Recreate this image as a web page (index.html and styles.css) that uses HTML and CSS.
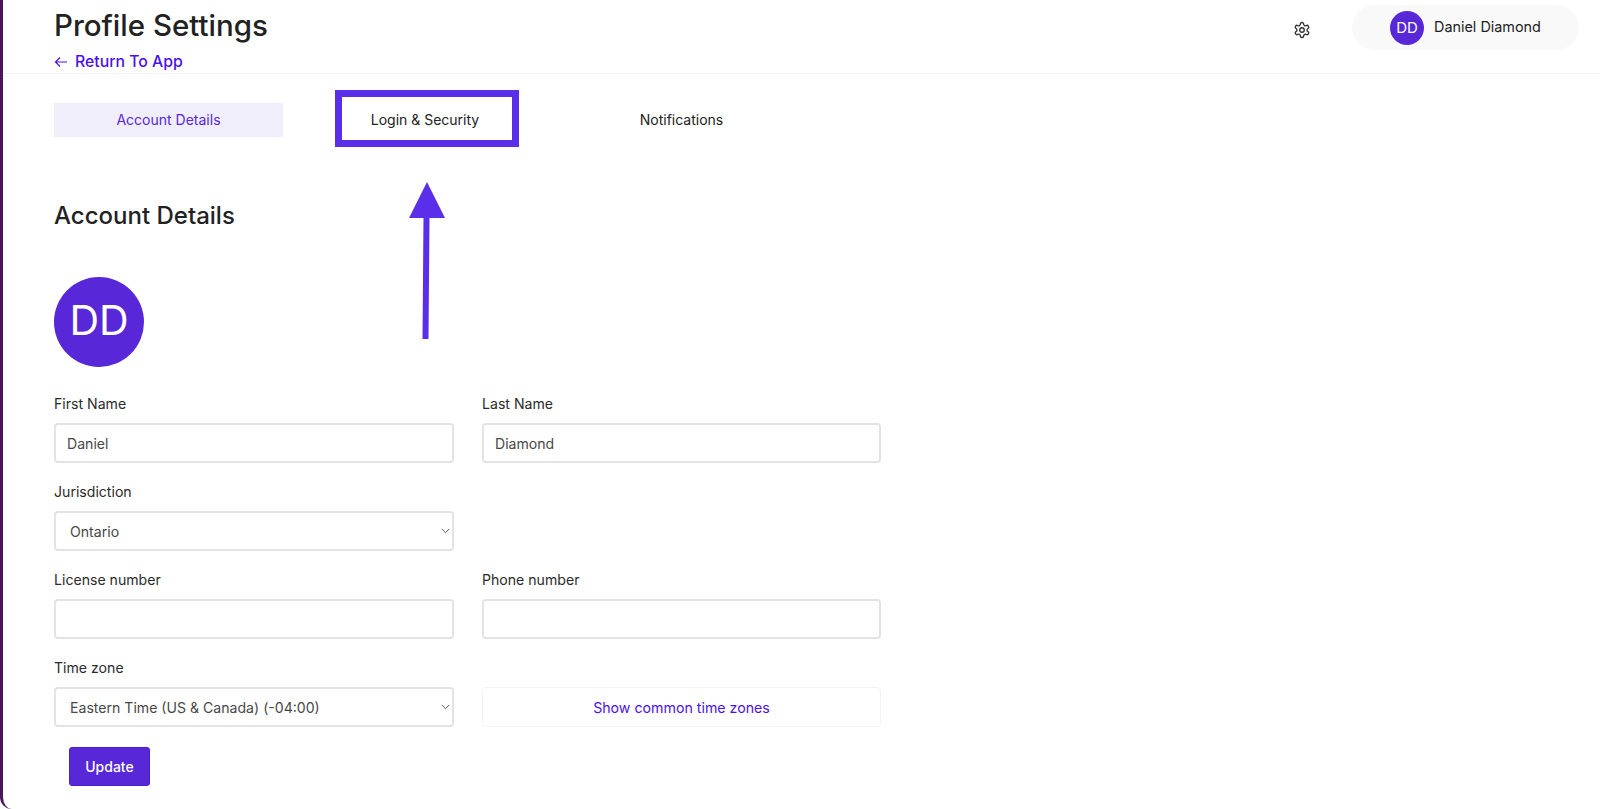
FILE: index.html
```html
<!DOCTYPE html>
<html lang="en">

<head>
  <meta charset="UTF-8">
  <meta name="viewport" content="width=device-width, initial-scale=1.0">
  <title>Profile Settings</title>
  <link rel="stylesheet" href="styles.css">
</head>

<body>
  <div class="app">
    <header class="topbar">
      <div class="topbar-title">
        <h1>Profile Settings</h1>
        <a href="#" class="back-link">
          <svg width="14" height="12" viewBox="0 0 14 12" fill="none" stroke="currentColor" stroke-width="1.2"><path d="M13 6H1.5M6 1.5L1.5 6L6 10.5"/></svg>
          Return To App
        </a>
      </div>
      <a href="#" class="gear" aria-label="Settings">
        <svg width="18" height="18" viewBox="0 0 24 24" fill="none" stroke="#333" stroke-width="1.8" stroke-linecap="round" stroke-linejoin="round"><path d="M12.2 2h-.4a2 2 0 0 0-2 2v.2a2 2 0 0 1-1 1.7l-.4.3a2 2 0 0 1-2 0l-.2-.1a2 2 0 0 0-2.7.7l-.2.4a2 2 0 0 0 .7 2.7l.2.1a2 2 0 0 1 1 1.7v.5a2 2 0 0 1-1 1.8l-.2.1a2 2 0 0 0-.7 2.7l.2.4a2 2 0 0 0 2.7.7l.2-.1a2 2 0 0 1 2 0l.4.3a2 2 0 0 1 1 1.7v.2a2 2 0 0 0 2 2h.4a2 2 0 0 0 2-2v-.2a2 2 0 0 1 1-1.7l.4-.3a2 2 0 0 1 2 0l.2.1a2 2 0 0 0 2.7-.7l.2-.4a2 2 0 0 0-.7-2.7l-.2-.1a2 2 0 0 1-1-1.8v-.5a2 2 0 0 1 1-1.7l.2-.1a2 2 0 0 0 .7-2.7l-.2-.4a2 2 0 0 0-2.7-.7l-.2.1a2 2 0 0 1-2 0l-.4-.3a2 2 0 0 1-1-1.7V4a2 2 0 0 0-2-2z"/><circle cx="12" cy="12" r="3"/></svg>
      </a>
      <div class="user-pill">
        <span class="user-avatar">DD</span>
        <span class="user-name">Daniel Diamond</span>
      </div>
    </header>

    <main class="content">
      <nav class="tabs">
        <a href="#" class="tab active">Account Details</a>
        <a href="#" class="tab">Login &amp; Security</a>
        <a href="#" class="tab">Notifications</a>
      </nav>

      <h2>Account Details</h2>
      <div class="big-avatar">DD</div>

      <form class="details-form">
        <div class="field">
          <label for="first">First Name</label>
          <input id="first" type="text" value="Daniel">
        </div>
        <div class="field">
          <label for="last">Last Name</label>
          <input id="last" type="text" value="Diamond">
        </div>
        <div class="field">
          <label for="jurisdiction">Jurisdiction</label>
          <div class="select-wrap">
            <select id="jurisdiction">
              <option>Ontario</option>
            </select>
            <svg class="chevron" width="9" height="6" viewBox="0 0 9 6" fill="none" stroke="#555" stroke-width="1"><path d="M.8 1l3.7 3.7L8.2 1"/></svg>
          </div>
        </div>
        <div class="field empty"></div>
        <div class="field">
          <label for="license">License number</label>
          <input id="license" type="text">
        </div>
        <div class="field">
          <label for="phone">Phone number</label>
          <input id="phone" type="text">
        </div>
        <div class="field">
          <label for="zone">Time zone</label>
          <div class="select-wrap">
            <select id="zone">
              <option>Eastern Time (US &amp; Canada) (-04:00)</option>
            </select>
            <svg class="chevron" width="9" height="6" viewBox="0 0 9 6" fill="none" stroke="#555" stroke-width="1"><path d="M.8 1l3.7 3.7L8.2 1"/></svg>
          </div>
        </div>
        <div class="field zone-toggle">
          <button type="button" class="common-zones">Show common time zones</button>
        </div>
      </form>

      <button type="button" class="update-btn">Update</button>
    </main>

    <!-- annotation drawn over the screenshot -->
    <div class="callout-box"></div>
    <svg class="callout-arrow" width="36" height="157" viewBox="0 0 36 157">
      <path d="M18 0L36 36H20.5L19.5 157H13.5L14.5 36H0z" fill="#5b2eea"/>
    </svg>
  </div>
</body>

</html>
```

FILE: styles.css
```css
* {
  box-sizing: border-box;
}

html, body {
  margin: 0;
  height: 100%;
  background-color: #fff;
}

body {
  font-family: 'Inter', 'Liberation Sans', sans-serif;
  color: #222;
  overflow: hidden;
}

a {
  text-decoration: none;
}

.app {
  position: relative;
  height: 809px;
  border-left: 3px solid #4a1659;
  border-bottom-left-radius: 12px;
}

.topbar {
  display: flex;
  align-items: flex-start;
  height: 74px;
  padding: 5px 21px 0 51px;
  border-bottom: 1px solid #f3f3f4;
}

.topbar-title {
  flex: 1;
}

h1 {
  margin: 0;
  font-size: 29.5px;
  line-height: 41px;
  font-weight: 500;
  color: #222;
}

.back-link {
  display: flex;
  align-items: center;
  gap: 7px;
  margin-top: 6px;
  font-size: 15.8px;
  line-height: 20px;
  font-weight: 500;
  color: #4a12e8;
}

.gear {
  display: flex;
  margin: 16px 41px 0 0;
}

.user-pill {
  display: flex;
  align-items: center;
  gap: 10px;
  width: 227px;
  height: 45px;
  padding-left: 38px;
  border-radius: 23px;
  background-color: #f9f9fa;
}

.user-avatar {
  display: flex;
  align-items: center;
  justify-content: center;
  width: 34px;
  height: 34px;
  border-radius: 50%;
  background-color: #5727d8;
  color: #fff;
  font-size: 15px;
}

.user-name {
  font-size: 14.4px;
  line-height: 20px;
  margin-top: -2px;
  color: #222;
}

.content {
  padding: 29px 0 0 51px;
}

.tabs {
  display: flex;
  gap: 27.5px;
}

.tab {
  width: 229px;
  height: 34px;
  line-height: 34px;
  text-align: center;
  font-size: 14px;
  color: #222;
}

.tab.active {
  background-color: #f1eefc;
  color: #5727d8;
}

h2 {
  margin: 64px 0 0;
  font-size: 24px;
  line-height: 30px;
  font-weight: 500;
  color: #222;
}

.big-avatar {
  display: flex;
  align-items: center;
  justify-content: center;
  width: 90px;
  height: 90px;
  margin-top: 46px;
  padding-bottom: 4px;
  border-radius: 50%;
  background-color: #5727d8;
  color: #fff;
  font-size: 41px;
}

.details-form {
  display: grid;
  grid-template-columns: 400px 399px;
  column-gap: 28px;
  row-gap: 18px;
  margin-top: 26px;
}

.field label {
  display: block;
  height: 20px;
  margin-bottom: 10px;
  font-size: 14.1px;
  line-height: 22px;
  color: #2b2b2b;
}

.field input, .field select {
  display: block;
  width: 100%;
  height: 40px;
  border: 2px solid #e3e3e3;
  border-radius: 4px;
  background-color: #fff;
  font-family: inherit;
  font-size: 14.1px;
  color: #484848;
}

.field input {
  padding: 0 11px;
}

.field select {
  padding: 0 14px;
  appearance: none;
}

.select-wrap {
  position: relative;
}

.chevron {
  position: absolute;
  top: 17px;
  right: 4px;
}

.zone-toggle {
  padding-top: 30px;
}

.common-zones {
  display: block;
  width: 100%;
  height: 40px;
  border: 1px solid #f3f3f4;
  border-radius: 4px;
  background-color: #fff;
  font-family: inherit;
  font-size: 14.2px;
  color: #4a12e8;
}

.update-btn {
  display: block;
  width: 81px;
  height: 39px;
  margin: 20px 0 0 15px;
  border: 1px solid #4a1fd0;
  border-radius: 3px;
  background-color: #5727d8;
  color: #fff;
  font-family: inherit;
  font-size: 14px;
  font-weight: 500;
}

.callout-box {
  position: absolute;
  left: 332px;
  top: 90px;
  width: 184px;
  height: 57px;
  border: 7px solid #5b2eea;
}

.callout-arrow {
  position: absolute;
  left: 406px;
  top: 182px;
}
```
